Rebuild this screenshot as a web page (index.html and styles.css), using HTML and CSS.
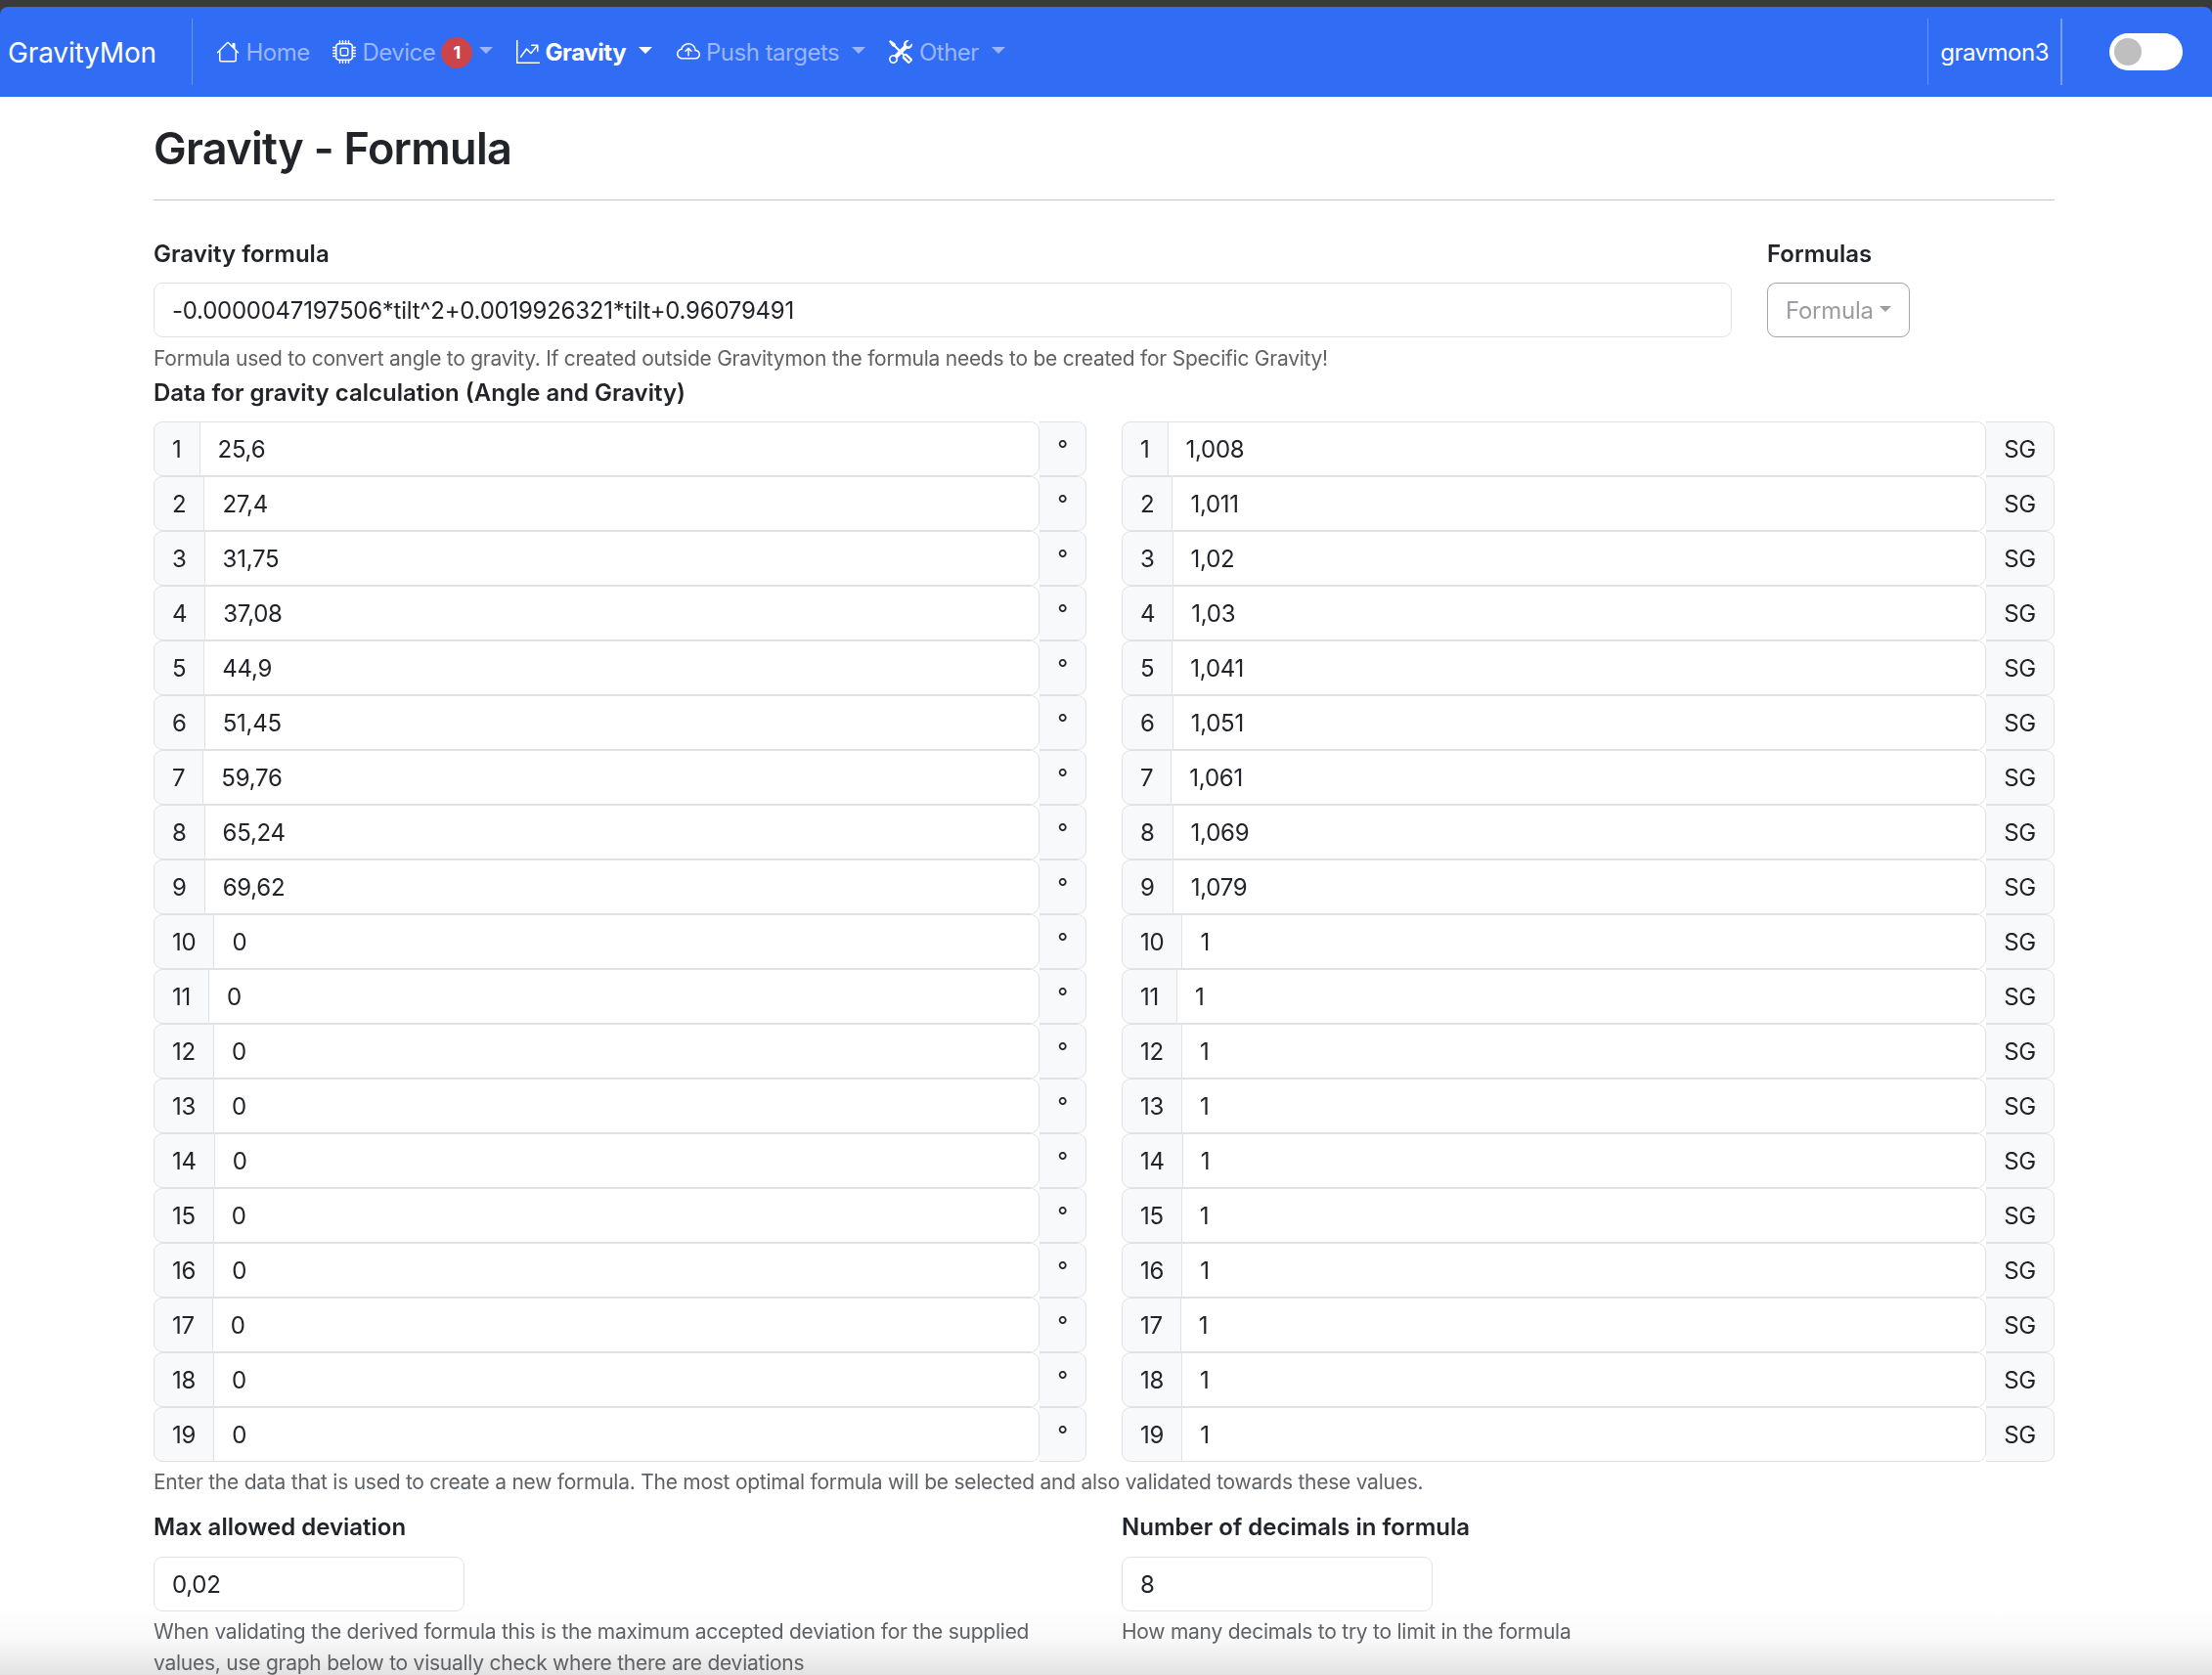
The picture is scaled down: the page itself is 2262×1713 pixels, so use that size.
FILE: index.html
```html
<!DOCTYPE html>
<html lang="en">
<head>
<meta charset="utf-8">
<title>Gravity - Formula</title>
<link rel="stylesheet" href="styles.css">
</head>
<body>
<div class="chrome-top"></div>
<nav class="navbar">
  <a class="brand">GravityMon</a>
  <span class="vr vr-brand"></span>
  <ul class="nav">
    <li class="nav-item"><svg class="icon" viewBox="0 0 16 16"><path d="M8.707 1.5a1 1 0 0 0-1.414 0L.646 8.146a.5.5 0 0 0 .708.708L2 8.207V13.5A1.5 1.5 0 0 0 3.5 15h9a1.5 1.5 0 0 0 1.5-1.5V8.207l.646.647a.5.5 0 0 0 .708-.708L13 5.793V2.5a.5.5 0 0 0-.5-.5h-1a.5.5 0 0 0-.5.5v1.293L8.707 1.5ZM13 7.207V13.5a.5.5 0 0 1-.5.5h-9a.5.5 0 0 1-.5-.5V7.207l5-5 5 5Z"/></svg><span>Home</span></li>
    <li class="nav-item"><svg class="icon icon-cpu" viewBox="0 0 16 16"><path d="M5 0a.5.5 0 0 1 .5.5V2h1V.5a.5.5 0 0 1 1 0V2h1V.5a.5.5 0 0 1 1 0V2h1V.5a.5.5 0 0 1 1 0V2A2.5 2.5 0 0 1 14 4.5h1.5a.5.5 0 0 1 0 1H14v1h1.5a.5.5 0 0 1 0 1H14v1h1.5a.5.5 0 0 1 0 1H14v1h1.5a.5.5 0 0 1 0 1H14a2.5 2.5 0 0 1-2.5 2.5v1.5a.5.5 0 0 1-1 0V14h-1v1.5a.5.5 0 0 1-1 0V14h-1v1.5a.5.5 0 0 1-1 0V14h-1v1.5a.5.5 0 0 1-1 0V14A2.5 2.5 0 0 1 2 11.5H.5a.5.5 0 0 1 0-1H2v-1H.5a.5.5 0 0 1 0-1H2v-1H.5a.5.5 0 0 1 0-1H2v-1H.5a.5.5 0 0 1 0-1H2A2.5 2.5 0 0 1 4.5 2V.5A.5.5 0 0 1 5 0zm-.5 3A1.5 1.5 0 0 0 3 4.5v7A1.5 1.5 0 0 0 4.5 13h7a1.5 1.5 0 0 0 1.5-1.5v-7A1.5 1.5 0 0 0 11.5 3h-7zM5 6.5A1.5 1.5 0 0 1 6.5 5h3A1.5 1.5 0 0 1 11 6.5v3A1.5 1.5 0 0 1 9.5 11h-3A1.5 1.5 0 0 1 5 9.5v-3zM6.5 6a.5.5 0 0 0-.5.5v3a.5.5 0 0 0 .5.5h3a.5.5 0 0 0 .5-.5v-3a.5.5 0 0 0-.5-.5h-3z"/></svg><span>Device</span><span class="badge">1</span><i class="caret caret-badge"></i></li>
    <li class="nav-item active"><svg class="icon" viewBox="0 0 16 16"><path fill-rule="evenodd" d="M0 0h1v15h15v1H0V0Zm10 3.5a.5.5 0 0 1 .5-.5h4a.5.5 0 0 1 .5.5v4a.5.5 0 0 1-1 0V4.9l-3.613 4.417a.5.5 0 0 1-.74.037L7.06 6.767l-3.656 5.027a.5.5 0 0 1-.808-.588l4-5.5a.5.5 0 0 1 .758-.06l2.609 2.61L13.445 4H10.5a.5.5 0 0 1-.5-.5Z"/></svg><span>Gravity</span><i class="caret"></i></li>
    <li class="nav-item"><svg class="icon" viewBox="0 0 16 16"><path fill-rule="evenodd" d="M7.646 5.146a.5.5 0 0 1 .708 0l2 2a.5.5 0 0 1-.708.708L8.5 6.707V10.5a.5.5 0 0 1-1 0V6.707L6.354 7.854a.5.5 0 1 1-.708-.708l2-2z"/><path d="M4.406 3.342A5.53 5.53 0 0 1 8 2c2.69 0 4.923 2 5.166 4.579C14.758 6.804 16 8.137 16 9.773 16 11.569 14.502 13 12.687 13H3.781C1.708 13 0 11.366 0 9.318c0-1.763 1.266-3.223 2.942-3.593.143-.863.698-1.723 1.464-2.383zm.653.757c-.757.653-1.153 1.44-1.153 2.056v.448l-.445.049C2.064 6.805 1 7.952 1 9.318 1 10.785 2.23 12 3.781 12h8.906C13.98 12 15 10.988 15 9.773c0-1.216-1.02-2.228-2.313-2.228h-.5v-.5C12.188 4.825 10.328 3 8 3a4.53 4.53 0 0 0-2.941 1.1z"/></svg><span>Push targets</span><i class="caret"></i></li>
    <li class="nav-item"><svg class="icon" viewBox="0 0 16 16"><path d="M1 0 0 1l2.2 3.081a1 1 0 0 0 .815.419h.07a1 1 0 0 1 .708.293l2.675 2.675-2.617 2.654A3.003 3.003 0 0 0 0 13a3 3 0 1 0 5.878-.851l2.654-2.617.968.968-.305.914a1 1 0 0 0 .242 1.023l3.27 3.27a.997.997 0 0 0 1.414 0l1.586-1.586a.997.997 0 0 0 0-1.414l-3.27-3.27a1 1 0 0 0-1.023-.242L10.5 9.5l-.96-.96 2.68-2.643A3.005 3.005 0 0 0 16 3c0-.269-.035-.53-.102-.777l-2.14 2.141L12 4l-.364-1.757L13.777.102a3 3 0 0 0-3.675 3.68L7.462 6.46 4.793 3.793a1 1 0 0 1-.293-.707v-.071a1 1 0 0 0-.419-.814L1 0Zm9.646 10.646a.5.5 0 0 1 .708 0l2.914 2.915a.5.5 0 0 1-.707.707l-2.915-2.914a.5.5 0 0 1 0-.708ZM3 11l.471.242.529.026.287.445.445.287.026.529L5 13l-.242.471-.026.529-.445.287-.287.445-.529.026L3 15l-.471-.242L2 14.732l-.287-.445L1.268 14l-.026-.529L1 13l.242-.471.026-.529.445-.287.287-.445.529-.026L3 11Z"/></svg><span>Other</span><i class="caret"></i></li>
  </ul>
  <span class="vr"></span>
  <span class="device-name">gravmon3</span>
  <span class="vr vr-strong"></span>
  <span class="toggle"><i class="knob"></i></span>
</nav>
<main class="container">
  <h1 class="title">Gravity - Formula</h1>
  <hr class="rule">
  <div class="formula-row">
    <div class="formula-col">
      <div class="label">Gravity formula</div>
      <div class="field">-0.0000047197506*tilt^2+0.0019926321*tilt+0.96079491</div>
    </div>
    <div class="formulas-col">
      <div class="label">Formulas</div>
      <div class="dropdown-btn">Formula<i class="caret"></i></div>
    </div>
  </div>
  <div class="help">Formula used to convert angle to gravity. If created outside Gravitymon the formula needs to be created for Specific Gravity!</div>
  <div class="label label-data">Data for gravity calculation (Angle and Gravity)</div>
  <div class="data-grid">
    <div class="data-col">
      <div class="group"><span class="addon">1</span><span class="group-field">25,6</span><span class="addon unit">°</span></div>
      <div class="group"><span class="addon">2</span><span class="group-field">27,4</span><span class="addon unit">°</span></div>
      <div class="group"><span class="addon">3</span><span class="group-field">31,75</span><span class="addon unit">°</span></div>
      <div class="group"><span class="addon">4</span><span class="group-field">37,08</span><span class="addon unit">°</span></div>
      <div class="group"><span class="addon">5</span><span class="group-field">44,9</span><span class="addon unit">°</span></div>
      <div class="group"><span class="addon">6</span><span class="group-field">51,45</span><span class="addon unit">°</span></div>
      <div class="group"><span class="addon">7</span><span class="group-field">59,76</span><span class="addon unit">°</span></div>
      <div class="group"><span class="addon">8</span><span class="group-field">65,24</span><span class="addon unit">°</span></div>
      <div class="group"><span class="addon">9</span><span class="group-field">69,62</span><span class="addon unit">°</span></div>
      <div class="group"><span class="addon">10</span><span class="group-field">0</span><span class="addon unit">°</span></div>
      <div class="group"><span class="addon">11</span><span class="group-field">0</span><span class="addon unit">°</span></div>
      <div class="group"><span class="addon">12</span><span class="group-field">0</span><span class="addon unit">°</span></div>
      <div class="group"><span class="addon">13</span><span class="group-field">0</span><span class="addon unit">°</span></div>
      <div class="group"><span class="addon">14</span><span class="group-field">0</span><span class="addon unit">°</span></div>
      <div class="group"><span class="addon">15</span><span class="group-field">0</span><span class="addon unit">°</span></div>
      <div class="group"><span class="addon">16</span><span class="group-field">0</span><span class="addon unit">°</span></div>
      <div class="group"><span class="addon">17</span><span class="group-field">0</span><span class="addon unit">°</span></div>
      <div class="group"><span class="addon">18</span><span class="group-field">0</span><span class="addon unit">°</span></div>
      <div class="group"><span class="addon">19</span><span class="group-field">0</span><span class="addon unit">°</span></div>
    </div>
    <div class="data-col">
      <div class="group"><span class="addon">1</span><span class="group-field">1,008</span><span class="addon">SG</span></div>
      <div class="group"><span class="addon">2</span><span class="group-field">1,011</span><span class="addon">SG</span></div>
      <div class="group"><span class="addon">3</span><span class="group-field">1,02</span><span class="addon">SG</span></div>
      <div class="group"><span class="addon">4</span><span class="group-field">1,03</span><span class="addon">SG</span></div>
      <div class="group"><span class="addon">5</span><span class="group-field">1,041</span><span class="addon">SG</span></div>
      <div class="group"><span class="addon">6</span><span class="group-field">1,051</span><span class="addon">SG</span></div>
      <div class="group"><span class="addon">7</span><span class="group-field">1,061</span><span class="addon">SG</span></div>
      <div class="group"><span class="addon">8</span><span class="group-field">1,069</span><span class="addon">SG</span></div>
      <div class="group"><span class="addon">9</span><span class="group-field">1,079</span><span class="addon">SG</span></div>
      <div class="group"><span class="addon">10</span><span class="group-field">1</span><span class="addon">SG</span></div>
      <div class="group"><span class="addon">11</span><span class="group-field">1</span><span class="addon">SG</span></div>
      <div class="group"><span class="addon">12</span><span class="group-field">1</span><span class="addon">SG</span></div>
      <div class="group"><span class="addon">13</span><span class="group-field">1</span><span class="addon">SG</span></div>
      <div class="group"><span class="addon">14</span><span class="group-field">1</span><span class="addon">SG</span></div>
      <div class="group"><span class="addon">15</span><span class="group-field">1</span><span class="addon">SG</span></div>
      <div class="group"><span class="addon">16</span><span class="group-field">1</span><span class="addon">SG</span></div>
      <div class="group"><span class="addon">17</span><span class="group-field">1</span><span class="addon">SG</span></div>
      <div class="group"><span class="addon">18</span><span class="group-field">1</span><span class="addon">SG</span></div>
      <div class="group"><span class="addon">19</span><span class="group-field">1</span><span class="addon">SG</span></div>
    </div>
  </div>
  <div class="help help-tight">Enter the data that is used to create a new formula. The most optimal formula will be selected and also validated towards these values.</div>
  <div class="settings-grid">
    <div>
      <div class="label">Max allowed deviation</div>
      <div class="field field-short">0,02</div>
      <div class="help help-tight">When validating the derived formula this is the maximum accepted deviation for the supplied values, use graph below to visually check where there are deviations</div>
    </div>
    <div>
      <div class="label">Number of decimals in formula</div>
      <div class="field field-short">8</div>
      <div class="help help-tight">How many decimals to try to limit in the formula</div>
    </div>
  </div>
</main>
<div class="bottom-fade"></div>
</body>
</html>
```
FILE: styles.css
```css
* { box-sizing: border-box; }
html, body { margin: 0; height: 100%; overflow: hidden; }
body {
  background: #fff;
  color: #212529;
  font-family: Inter, "Liberation Sans", sans-serif;
  font-size: 24px;
  line-height: 36px;
  letter-spacing: -.25px;
}
.chrome-top { height: 7px; background: #3a3a3a; }
.navbar {
  display: flex;
  align-items: center;
  height: 92px;
  background: #316cf5;
  border-radius: 8px 8px 0 0;
  box-shadow: 0 -8px 0 0 #3a3a3a;
  padding-left: 8px;
}
.brand { color: #fff; font-size: 28px; letter-spacing: -.15px; width: 188px; padding-top: 2px; }
.vr { width: 1px; height: 68px; background: rgba(255,255,255,.28); flex: none; }
.vr-strong { width: 2px; background: rgba(255,255,255,.35); }
.nav { display: flex; list-style: none; margin: 0; padding: 2px 0 0 24px; flex: 1; letter-spacing: -.5px; }
.nav-item {
  display: flex;
  align-items: center;
  color: #9ab6fa;
  margin-right: 24.2px;
}
.nav-item .icon { width: 24px; height: 24px; fill: #fff; margin: -2px 6.5px 0 0; flex: none; }
.nav-item .icon-cpu { margin-left: -.5px; margin-right: 6px; }
.nav-item.active { color: #fff; font-weight: 700; letter-spacing: -.4px; }
.nav-item.active .icon { margin-right: 5px; }
.badge {
  display: inline-block;
  width: 32px;
  height: 32px;
  margin-left: 6px;
  border-radius: 50%;
  background: #cb444a;
  color: #fff;
  font-size: 18px;
  font-weight: 700;
  line-height: 32px;
  text-align: center;
  letter-spacing: 0;
}
.caret {
  display: inline-block;
  width: 0;
  height: 0;
  margin-left: 13px;
  margin-bottom: 6px;
  border-top: 7px solid currentColor;
  border-left: 7px solid transparent;
  border-right: 7px solid transparent;
}
.caret-badge { margin-left: 7px; }
.device-name { color: #fff; padding: 2px 12px 0; letter-spacing: -.5px; }
.toggle {
  display: block;
  position: relative;
  width: 75px;
  height: 38px;
  margin: 0 30px 0 48px;
  border-radius: 19px;
  background: #fff;
  flex: none;
}
.knob {
  position: absolute;
  left: 5px;
  top: 5px;
  width: 28px;
  height: 28px;
  border-radius: 50%;
  background: #bfbfbf;
}
.container { position: relative; z-index: 1; width: 1944px; margin-left: 157px; }
.title { margin: 25px 0 0; font-size: 45px; line-height: 56px; font-weight: 600; letter-spacing: -.68px; }
.rule { height: 1px; margin: 24px 0 0; border: 0; background: #c6c7c8; }
.formula-row { display: flex; margin-top: 37px; }
.formula-col { width: 1614px; margin-right: 36px; }
.formulas-col { width: 294px; }
.label { font-weight: 600; margin-bottom: 11px; letter-spacing: 0; }
.field {
  height: 56px;
  padding: 10px 18px 8px;
  border: 1.5px solid #dee2e6;
  border-radius: 9px;
  background: #fff;
}
.field-short { width: 318px; }
.dropdown-btn {
  display: inline-flex;
  align-items: center;
  width: 146px;
  height: 56px;
  padding: 2px 18px 0;
  border: 1.5px solid #a3a5a8;
  border-radius: 9px;
  color: #9a9da1;
}
.dropdown-btn .caret { margin-left: 6px; margin-bottom: 4px; border-top-width: 6px; border-left-width: 6px; border-right-width: 6px; }
.help { font-size: 21px; line-height: 32px; color: #5e6266; margin-top: 6px; }
.help-tight { margin-top: 5px; }
.label-data { margin: 0 0 11px; padding-top: 1px; }
.data-grid { display: grid; grid-template-columns: 954px 954px; column-gap: 36px; }
.group { display: flex; height: 56px; }
.addon {
  display: flex;
  align-items: center;
  justify-content: center;
  flex: none;
  padding: 2px 18px 0;
  background: #f8f9fa;
  border: 1.5px solid #dee2e6;
  border-radius: 9px;
}
.group .addon:first-child { border-right-width: 1px; border-radius: 9px 0 0 9px; }
.group .addon:last-child { border-left: 0; border-radius: 0 9px 9px 0; }
.unit { width: 48px; padding: 2px 0 0; }
.group-field {
  flex: 1;
  display: flex;
  align-items: center;
  padding: 2px 18px 0;
  background: #fff;
  border: 1.5px solid #dee2e6;
  border-left: 0;
  border-radius: 0 9px 9px 0;
}
.settings-grid { display: grid; grid-template-columns: 954px 954px; column-gap: 36px; margin-top: 12px; }
.settings-grid .label { margin-bottom: 12px; }
.bottom-fade {
  position: fixed;
  left: 0;
  right: 0;
  bottom: 0;
  height: 68px;
  background: linear-gradient(to bottom, rgba(226,226,226,0), #f8f8f8 50%, #e2e2e2);
}
```
